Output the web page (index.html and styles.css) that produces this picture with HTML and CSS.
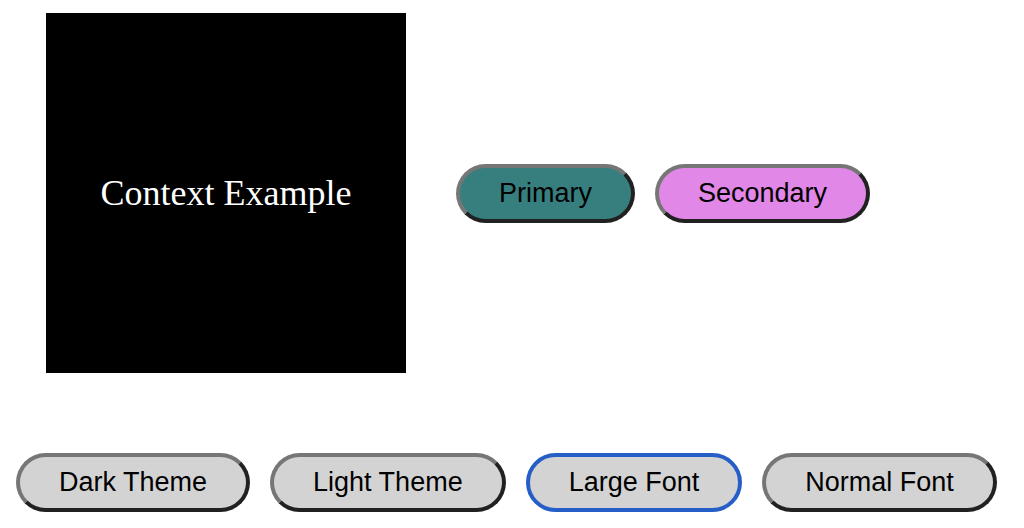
FILE: index.html
```html
<!DOCTYPE html>
<html lang="en">
<head>
<meta charset="utf-8">
<title>Context Example</title>
<link rel="stylesheet" href="styles.css">
</head>
<body>
<main class="example">
  <div class="panel">Context Example</div>
  <div class="actions">
    <button type="button" class="button primary">Primary</button>
    <button type="button" class="button secondary">Secondary</button>
  </div>
</main>
<div class="controls">
  <button type="button" class="button">Dark Theme</button>
  <button type="button" class="button">Light Theme</button>
  <button type="button" class="button selected">Large Font</button>
  <button type="button" class="button">Normal Font</button>
</div>
</body>
</html>
```
FILE: styles.css
```css
body {
  margin: 0;
  background: #fff;
}

.example {
  display: flex;
  align-items: center;
  gap: 50px;
  padding: 13px 46px 80px;
}

.panel {
  display: flex;
  align-items: center;
  justify-content: center;
  width: 360px;
  aspect-ratio: 1;
  background: #000;
  color: #fff;
  font: 36px "Liberation Serif", "Times New Roman", serif;
}

.actions,
.controls {
  display: flex;
  gap: 20px;
}

.controls {
  padding: 0 16px;
}

.button {
  padding: 10px 39px;
  border: 4px solid;
  border-color: #767676 #212121 #212121 #767676;
  border-radius: 40px;
  background: #d3d3d3;
  color: #000;
  font: 27px/31px "Liberation Sans", Arial, sans-serif;
  white-space: nowrap;
}

.primary {
  background: #377f7f;
}

.secondary {
  background: #e187e7;
}

.selected {
  border-color: #265ec8;
}
```
